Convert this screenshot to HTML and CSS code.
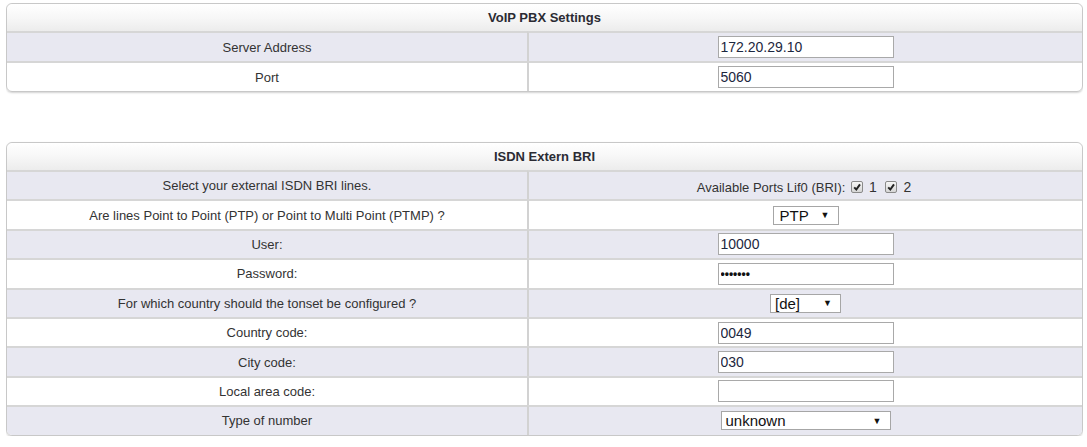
FILE: index.html
```html
<!DOCTYPE html>
<html lang="en">
<head>
    <meta charset="UTF-8">
    <title>Setup - PBX / ISDN</title>
    <link rel="stylesheet" href="styles.css">
</head>
<body>
    <table class="settings voip">
        <colgroup><col class="col-label"><col></colgroup>
        <tr><th colspan="2">VoIP PBX Settings</th></tr>
        <tr class="odd">
            <td>Server Address</td>
            <td><input type="text" class="field" value="172.20.29.10"></td>
        </tr>
        <tr>
            <td>Port</td>
            <td><input type="text" class="field" value="5060"></td>
        </tr>
    </table>

    <table class="settings isdn">
        <colgroup><col class="col-label"><col></colgroup>
        <tr><th colspan="2">ISDN Extern BRI</th></tr>
        <tr class="odd">
            <td>Select your external ISDN BRI lines.</td>
            <td class="ports">
                Available Ports Lif0 (BRI):
                <span class="check"><svg viewBox="0 0 10 10"><path d="M2.2 5.4 L4.3 7.5 L8 2.4" /></svg></span><span class="num">1</span>
                <span class="check"><svg viewBox="0 0 10 10"><path d="M2.2 5.4 L4.3 7.5 L8 2.4" /></svg></span><span class="num">2</span>
            </td>
        </tr>
        <tr>
            <td>Are lines Point to Point (PTP) or Point to Multi Point (PTMP) ?</td>
            <td><span class="dropdown w-ptp"><span class="val">PTP</span><span class="arrow">&#9660;</span></span></td>
        </tr>
        <tr class="odd">
            <td>User:</td>
            <td><input type="text" class="field" value="10000"></td>
        </tr>
        <tr>
            <td>Password:</td>
            <td><input type="password" class="field pass" value="1234567"></td>
        </tr>
        <tr class="odd">
            <td>For which country should the tonset be configured ?</td>
            <td><span class="dropdown w-de"><span class="val">[de]</span><span class="arrow">&#9660;</span></span></td>
        </tr>
        <tr>
            <td>Country code:</td>
            <td><input type="text" class="field" value="0049"></td>
        </tr>
        <tr class="odd">
            <td>City code:</td>
            <td><input type="text" class="field" value="030"></td>
        </tr>
        <tr>
            <td>Local area code:</td>
            <td><input type="text" class="field" value=""></td>
        </tr>
        <tr class="odd">
            <td>Type of number</td>
            <td><span class="dropdown w-type"><span class="val">unknown</span><span class="arrow">&#9660;</span></span></td>
        </tr>
    </table>
</body>
</html>
```

FILE: styles.css
```css
* {
    box-sizing: border-box;
}

body {
    margin: 3px 4px 0 6px;
    font-family: "Liberation Sans", Arial, sans-serif;
    font-size: 13px;
    color: #333;
    background: #fff;
}

.settings {
    width: 1077px;
    table-layout: fixed;
    border-collapse: separate;
    border-spacing: 0;
    border: 1px solid #c8c8c8;
    border-radius: 6px;
    box-shadow: 0 1px 2px rgba(0, 0, 0, 0.18);
    overflow: hidden;
}

.col-label {
    width: 520px;
}

.isdn {
    margin-top: 50px;
}

.settings th {
    height: 27px;
    font-size: 13px;
    font-weight: bold;
    color: #2b2b33;
    background: linear-gradient(to bottom, #ffffff 0%, #f7f7f7 50%, #ececec 100%);
    border-top-left-radius: 6px;
    border-top-right-radius: 6px;
}

.settings td {
    height: 30px;
    padding: 0 4px;
    text-align: center;
    border-top: 2px solid #d6d6d6;
}

.isdn td {
    height: 29.4px;
}

.settings td + td {
    border-left: 2px solid #d2d2d2;
}

.settings tr.odd td {
    background: #e8e8f1;
}

.field {
    width: 176px;
    height: 22px;
    margin: 0;
    padding: 0 2px;
    border: 1px solid #a9a9a9;
    background: #fff;
    font-family: "Liberation Sans", Arial, sans-serif;
    font-size: 14px;
    color: #1c2740;
    vertical-align: middle;
}

.pass {
    font-size: 12px;
    font-weight: bold;
    letter-spacing: 0;
    color: #111;
}

.ports {
    font-size: 13px;
    padding-top: 3px !important;
}

.check {
    display: inline-block;
    width: 12px;
    height: 12px;
    margin-left: 2px;
    vertical-align: -1px;
    border: 1px solid #8a8a8a;
    border-radius: 2px;
    background: linear-gradient(to bottom, #f6f6f6, #d6d6d6);
    position: relative;
}

.check svg {
    position: absolute;
    left: 0;
    top: 0;
    width: 10px;
    height: 10px;
    fill: none;
    stroke: #222;
    stroke-width: 2;
}

.num {
    font-size: 14px;
    margin: 0 3px 0 6px;
}

.dropdown {
    display: inline-flex;
    align-items: center;
    justify-content: space-between;
    height: 19px;
    padding: 0 8px 0 4px;
    border: 1px solid #a6a6a6;
    background: #fff;
    font-size: 15px;
    color: #111;
    vertical-align: middle;
}

.dropdown .arrow {
    font-size: 9px;
    color: #111;
}

.w-ptp {
    width: 66px;
    padding-left: 6px;
}

.w-de {
    width: 71px;
    padding-left: 4px;
}

.w-type {
    width: 170px;
    padding-left: 4px;
}
```
